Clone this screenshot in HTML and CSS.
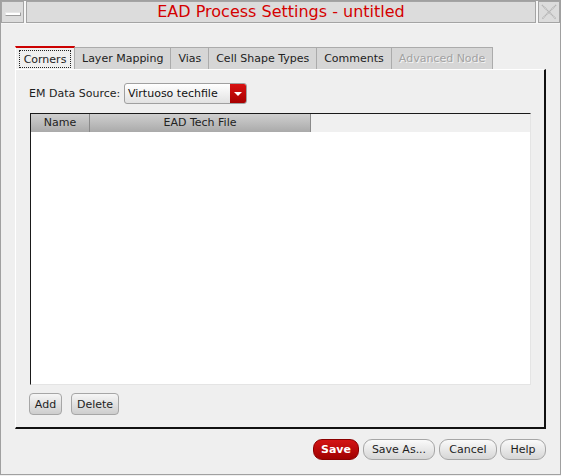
FILE: index.html
```html
<!DOCTYPE html>
<html>
<head>
<meta charset="utf-8">
<link rel="stylesheet" href="styles.css">
</head>
<body>
<div class="window">
  <div class="titlebar">
    <div class="tb-btn tb-min"><span class="min-bar"></span></div>
    <div class="tb-title">EAD Process Settings - untitled</div>
    <div class="tb-btn tb-close">
      <svg width="20" height="20" viewBox="0 0 20 20">
        <line x1="3" y1="3" x2="17" y2="17" stroke="#b4b4b4" stroke-width="1.6" stroke-dasharray="1.2 0.6"/>
        <line x1="17" y1="3" x2="3" y2="17" stroke="#b4b4b4" stroke-width="1.6" stroke-dasharray="1.2 0.6"/>
      </svg>
    </div>
  </div>
  <div class="content">
    <div class="tabs">
      <div class="tab active"><span class="focus">Corners</span></div>
      <div class="tab">Layer Mapping</div>
      <div class="tab">Vias</div>
      <div class="tab">Cell Shape Types</div>
      <div class="tab">Comments</div>
      <div class="tab disabled">Advanced Node</div>
    </div>
    <div class="panel">
      <div class="source-row">
        <span class="label">EM Data Source:</span>
        <div class="combo">
          <span class="combo-text">Virtuoso techfile</span>
          <span class="combo-btn"><span class="arrow"></span></span>
        </div>
      </div>
      <div class="table">
        <div class="thead">
          <div class="th th-name">Name</div>
          <div class="th th-file">EAD Tech File</div>
          <div class="th-rest"></div>
        </div>
        <div class="tbody"></div>
      </div>
      <div class="row-buttons">
        <button class="sbtn btn-add">Add</button>
        <button class="sbtn btn-del">Delete</button>
      </div>
    </div>
    <div class="footer">
      <button class="pbtn save">Save</button>
      <button class="pbtn btn-saveas">Save As...</button>
      <button class="pbtn btn-cancel">Cancel</button>
      <button class="pbtn btn-help">Help</button>
    </div>
  </div>
</div>
</body>
</html>
```
FILE: styles.css
```css
* { box-sizing: border-box; }
html, body { margin: 0; padding: 0; }
body {
  width: 561px;
  height: 476px;
  background: #efefef;
  font-family: "DejaVu Sans", sans-serif;
  font-size: 11px;
  color: #1e1e1e;
  overflow: hidden;
}
.window {
  width: 561px;
  height: 475px;
  border: 1px solid #a0a0a0;
  background: #efefef;
  display: flex;
  flex-direction: column;
}
.titlebar {
  display: flex;
  height: 23px;
  gap: 2px;
  background: #f6f6f6;
}
.tb-btn {
  width: 22px;
  height: 22px;
  background: #dcdcdc;
  border: 1px solid #a4a4a4;
  display: flex;
  align-items: center;
  justify-content: center;
}
.tb-min { width: 23px; }
.min-bar {
  width: 16px;
  height: 4px;
  background: #fff;
  border: 1px solid #9c9c9c;
  border-top-color: #e6e6e6;
  border-left-color: #e6e6e6;
  margin-top: 4px;
}
.tb-title {
  flex: 1;
  height: 22px;
  background: #dcdcdc;
  border: 1px solid #a4a4a4;
  color: #d40000;
  font-size: 16px;
  line-height: 20px;
  text-align: center;
}
.content {
  flex: 1;
  padding: 22px 14px 0 14px;
  display: flex;
  flex-direction: column;
}
.tabs {
  display: flex;
  height: 23px;
  align-items: flex-end;
}
.tab {
  height: 22px;
  padding: 0 7px;
  background: #d6d6d6;
  border: 1px solid #ababab;
  border-bottom: none;
  line-height: 21px;
  color: #222;
}
.tab + .tab { border-left: none; }
.tab.active {
  width: 60px;
  height: 23px;
  background: #efefef;
  border-top: 2px solid #cc0000;
  border-left: 1px solid #ffffff;
  border-right: 1px solid #ababab;
  padding: 2px 3px 0 3px;
  line-height: 17px;
}
.focus {
  display: block;
  border: 1px dotted #222;
  padding: 0 3px;
  height: 18px;
  text-align: center;
}
.tab.disabled {
  color: #a2a2a2;
  text-shadow: 1px 1px 0 #f4f4f4;
}
.panel {
  height: 360px;
  border-top: 1px solid #ffffff;
  border-left: 1px solid #ffffff;
  border-right: 2px solid #111;
  border-bottom: 2px solid #111;
  padding: 13px 13px 12px 13px;
  display: flex;
  flex-direction: column;
}
.source-row {
  display: flex;
  align-items: center;
  height: 21px;
}
.label { width: 95px; }
.combo {
  width: 123px;
  height: 21px;
  border: 1px solid #a0a0a0;
  border-radius: 3px;
  background: linear-gradient(#ffffff, #e2e2e2);
  display: flex;
  overflow: hidden;
}
.combo-text {
  flex: 1;
  padding-left: 3px;
  line-height: 19px;
  color: #111;
}
.combo-btn {
  width: 16px;
  background: linear-gradient(#d81212, #a80000);
  display: flex;
  align-items: center;
  justify-content: center;
}
.arrow {
  width: 0;
  height: 0;
  border-left: 4px solid transparent;
  border-right: 4px solid transparent;
  border-top: 4px solid #fff;
}
.table {
  flex: 1;
  margin-top: 9px;
  margin-left: 1px;
  border-top: 1px solid #1a1a1a;
  border-left: 1px solid #1a1a1a;
  border-right: 1px solid #e4e4e4;
  border-bottom: 1px solid #e4e4e4;
  display: flex;
  flex-direction: column;
}
.thead {
  display: flex;
  height: 18px;
}
.th {
  background: linear-gradient(#cfcfcf, #aaaaaa);
  text-align: center;
  line-height: 18px;
  color: #222;
  border-right: 1px solid #8a8a8a;
}
.th-name { width: 59px; }
.th-file { width: 221px; }
.th-rest { flex: 1; background: #f0f0f0; }
.tbody {
  flex: 1;
  background: #ffffff;
}
.row-buttons {
  display: flex;
  gap: 9px;
  margin-top: 8px;
}
.sbtn {
  font-family: "DejaVu Sans", sans-serif;
  font-size: 11px;
  color: #1e1e1e;
  height: 22px;
  padding: 0;
  border: 1px solid #a6a6a6;
  border-radius: 4px;
  background: linear-gradient(#f6f6f6, #cdcdcd);
}
.btn-add { width: 33px; }
.btn-del { width: 48px; }
.footer {
  display: flex;
  justify-content: flex-end;
  gap: 4px;
  margin-top: 10px;
}
.pbtn {
  font-family: "DejaVu Sans", sans-serif;
  font-size: 11px;
  color: #1e1e1e;
  height: 21px;
  padding: 0;
  border: 1px solid #a6a6a6;
  border-radius: 9px;
  background: linear-gradient(#fafafa, #d6d6d6);
}
.pbtn.save {
  width: 46px;
  color: #fff;
  font-weight: bold;
  border-color: #8a0000;
  background: linear-gradient(#d41414, #a00000);
}
.btn-saveas { width: 72px; }
.btn-cancel { width: 58px; }
.btn-help { width: 46px; margin-left: -1px; }
```
